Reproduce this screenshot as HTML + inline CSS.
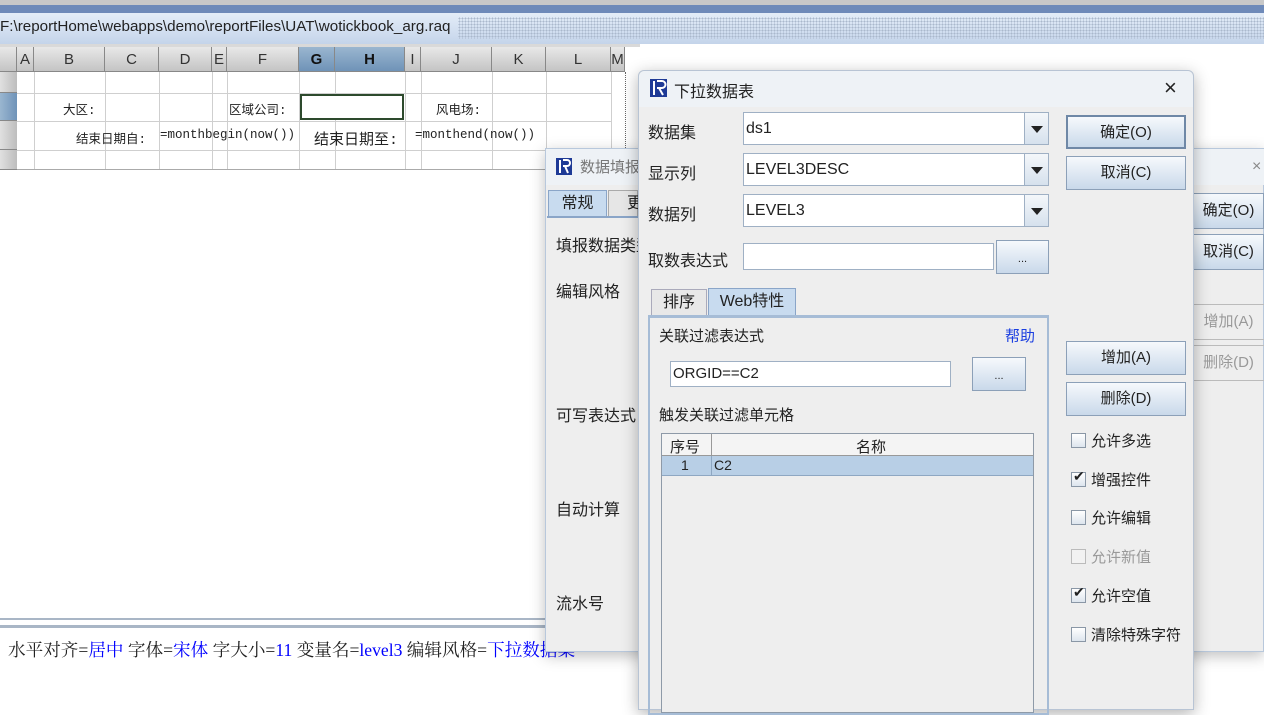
<!DOCTYPE html>
<html><head><meta charset="utf-8"><style>
*{margin:0;padding:0;box-sizing:border-box}
body{width:1264px;height:701px;overflow:hidden;background:#fff;position:relative;font-family:"Liberation Sans","Noto Sans CJK SC",sans-serif;font-size:15px;color:#222}
.a{position:absolute}
.ch{position:absolute;top:47px;height:25px;background:linear-gradient(#e8e8e8,#c4c4c4);border-right:1px solid #888;border-bottom:1px solid #888;text-align:center;font-size:15px;line-height:25px;color:#333}
.sel{background:linear-gradient(#9ab6d0,#6f93b8);font-weight:bold;color:#111}
.vl{position:absolute;top:72px;height:98px;width:1px;background:#cfcfcf}
.hl{position:absolute;left:17px;width:594px;height:1px;background:#cfcfcf}
.rh{position:absolute;left:0;width:17px;background:linear-gradient(90deg,#e0e0e0,#bdbdbd);border-bottom:1px solid #888}
.cell{position:absolute;font-family:"Liberation Mono","Noto Sans CJK SC",monospace;font-size:12.5px}
.btn{position:absolute;border:1px solid #8ca0b8;background:linear-gradient(#f6f9fc,#c9d9ea);text-align:center;font-size:15px;color:#222}
.lbl{position:absolute;font-size:16px;color:#222}
.combo{position:absolute;left:743px;width:306px;height:33px;border:1px solid #9fb0c4;background:#fff;font-size:16px;line-height:31px;padding-left:2px}
.combo i{position:absolute;right:0;top:0;width:24px;height:31px;border-left:1px solid #9fb0c4;background:linear-gradient(#f4f7fa,#d6e1ed)}
.combo i:after{content:"";position:absolute;left:6px;top:13px;border-left:6px solid transparent;border-right:6px solid transparent;border-top:7px solid #222}
.cb{position:absolute;left:1071px;width:15px;height:15px;border:1px solid #8a97a6;background:linear-gradient(#fff,#dde5ee)}
.cbl{position:absolute;left:1091px;font-size:15px}
</style></head><body>
<div class="a" style="left:0;top:0;width:1264px;height:5px;background:#c8c8c8"></div>
<div class="a" style="left:0;top:5px;width:1264px;height:8px;background:#6e8ab9"></div>
<div class="a" style="left:0;top:13px;width:1264px;height:31px;background:linear-gradient(#e4edf8,#c4d4ea)"></div>
<div class="a" style="left:458px;top:17px;width:806px;height:22px;background-image:radial-gradient(#aab8cc 0.8px,transparent 1px);background-size:3px 3px"></div>
<div class="a" style="left:0;top:18px;font-size:15.2px;color:#222">F:\reportHome\webapps\demo\reportFiles\UAT\wotickbook_arg.raq</div>
<div class="a" style="left:0;top:44px;width:640px;height:3px;background:#d9d9d9"></div>
<div class="ch" style="left:0;width:17px"></div>
<div class="ch" style="left:17px;width:17px">A</div>
<div class="ch" style="left:34px;width:71px">B</div>
<div class="ch" style="left:105px;width:54px">C</div>
<div class="ch" style="left:159px;width:53px">D</div>
<div class="ch" style="left:212px;width:15px">E</div>
<div class="ch" style="left:227px;width:72px">F</div>
<div class="ch sel" style="left:299px;width:36px">G</div>
<div class="ch sel" style="left:335px;width:70px">H</div>
<div class="ch" style="left:405px;width:16px">I</div>
<div class="ch" style="left:421px;width:71px">J</div>
<div class="ch" style="left:492px;width:54px">K</div>
<div class="ch" style="left:546px;width:65px">L</div>
<div class="ch" style="left:611px;width:14px">M</div>
<div class="rh" style="top:72px;height:21px"></div>
<div class="rh" style="top:93px;height:28px;background:linear-gradient(90deg,#9ab6d0,#6f93b8)"></div>
<div class="rh" style="top:121px;height:29px"></div>
<div class="rh" style="top:150px;height:20px"></div>
<div class="vl" style="left:34px"></div><div class="vl" style="left:105px"></div><div class="vl" style="left:159px"></div><div class="vl" style="left:212px"></div><div class="vl" style="left:227px"></div><div class="vl" style="left:299px"></div><div class="vl" style="left:335px"></div><div class="vl" style="left:405px"></div><div class="vl" style="left:421px"></div><div class="vl" style="left:492px"></div><div class="vl" style="left:546px"></div><div class="vl" style="left:611px"></div>
<div class="a" style="left:625px;top:72px;height:98px;border-left:1px dotted #666"></div>
<div class="hl" style="top:93px"></div><div class="hl" style="top:121px"></div><div class="hl" style="top:150px"></div><div class="hl" style="top:169px;background:#aaa"></div>
<div class="a" style="left:300px;top:94px;width:104px;height:26px;border:2px solid #2d4a2d;background:#fff"></div>
<div class="cell" style="left:63px;top:99px">大区:</div>
<div class="cell" style="left:229px;top:99px">区域公司:</div>
<div class="cell" style="left:436px;top:99px">风电场:</div>
<div class="cell" style="left:76px;top:128px">结束日期自:</div>
<div class="cell" style="left:160px;top:128px">=monthbegin(now())</div>
<div class="cell" style="left:314px;top:128px;font-size:15px">结束日期至:</div>
<div class="cell" style="left:415px;top:128px">=monthend(now())</div>
<div class="a" style="left:0;top:618px;width:545px;height:2px;background:#a9b6c6"></div>
<div class="a" style="left:0;top:625px;width:545px;height:3px;background:#a9b6c6"></div>
<div class="a" style="left:8px;top:637px;font-size:17.6px;font-family:'Liberation Serif','Noto Serif CJK SC',serif">水平对齐=<span style="color:#00f">居中</span> 字体=<span style="color:#00f">宋体</span> 字大小=<span style="color:#00f">11</span> 变量名=<span style="color:#00f">level3</span> 编辑风格=<span style="color:#00f">下拉数据集</span></div>
<div class="a" style="left:545px;top:148px;width:719px;height:504px;background:#eeeeee;border:1px solid #b8c8dc;box-shadow:0 4px 14px rgba(0,0,0,.25)"></div>
<div class="a" style="left:546px;top:149px;width:718px;height:36px;background:#eef2f6"></div>
<svg class="a" style="left:556px;top:158px" width="16" height="17"><rect width="16" height="17" fill="#1e3a96"/><rect x="3" y="2" width="2" height="13" fill="#fff"/><path d="M7 2h4a3 3 0 0 1 0 6h-4M9 8l3 7" stroke="#fff" stroke-width="2" fill="none"/></svg>
<div class="a" style="left:580px;top:156px;font-size:15px;color:#777">数据填报</div>
<div class="a" style="left:1252px;top:158px;font-size:16px;color:#888">×</div>
<div class="a" style="left:548px;top:190px;width:59px;height:27px;background:#c8dbef;border:1px solid #8aa5c8;border-bottom:none;text-align:center;line-height:25px;font-size:16px">常规</div>
<div class="a" style="left:608px;top:190px;width:30px;height:27px;background:#e6e6e6;border:1px solid #aaa;padding-left:18px;line-height:25px;font-size:16px">更</div>
<div class="a" style="left:547px;top:216px;width:91px;height:2px;background:#8aa5c8"></div>
<div class="lbl" style="left:556px;top:232px">填报数据类型</div>
<div class="lbl" style="left:556px;top:278px">编辑风格</div>
<div class="lbl" style="left:556px;top:402px">可写表达式</div>
<div class="lbl" style="left:556px;top:496px">自动计算</div>
<div class="lbl" style="left:556px;top:590px">流水号</div>
<div class="btn" style="left:1193px;top:193px;width:71px;height:36px;line-height:34px">确定(O)</div>
<div class="btn" style="left:1193px;top:234px;width:71px;height:36px;line-height:34px">取消(C)</div>
<div class="a" style="left:1193px;top:304px;width:71px;height:36px;border-top:1px solid #bbb;border-bottom:1px solid #bbb;line-height:34px;text-align:center;color:#999;font-size:15px">增加(A)</div>
<div class="a" style="left:1193px;top:345px;width:71px;height:36px;border-top:1px solid #bbb;border-bottom:1px solid #bbb;line-height:34px;text-align:center;color:#999;font-size:15px">删除(D)</div>
<div class="a" style="left:638px;top:70px;width:556px;height:640px;background:#eeeeee;border:1px solid #b8c4d4;border-radius:6px 6px 0 0;box-shadow:0 4px 16px rgba(0,0,0,.3)"></div>
<div class="a" style="left:639px;top:71px;width:554px;height:36px;background:#eef2f6;border-radius:6px 6px 0 0"></div>
<svg class="a" style="left:650px;top:79px" width="17" height="18"><rect width="17" height="18" fill="#1e3a96"/><rect x="3" y="2" width="2" height="14" fill="#fff"/><path d="M7 2h5a3 3 0 0 1 0 7h-5M9 9l4 7" stroke="#fff" stroke-width="2" fill="none"/></svg>
<div class="a" style="left:674px;top:78px;font-size:16px">下拉数据表</div>
<div class="a" style="left:1164px;top:75px;font-size:22px;font-weight:300">×</div>
<div class="lbl" style="left:648px;top:119px">数据集</div>
<div class="lbl" style="left:648px;top:160px">显示列</div>
<div class="lbl" style="left:648px;top:201px">数据列</div>
<div class="lbl" style="left:648px;top:247px">取数表达式</div>
<div class="combo" style="top:112px">ds1<i></i></div>
<div class="combo" style="top:153px">LEVEL3DESC<i></i></div>
<div class="combo" style="top:194px">LEVEL3<i></i></div>
<div class="a" style="left:743px;top:243px;width:251px;height:27px;border:1px solid #9fb0c4;background:#fff"></div>
<div class="btn" style="left:996px;top:240px;width:53px;height:34px;line-height:36px;font-size:11px">...</div>
<div class="btn" style="left:1066px;top:115px;width:120px;height:34px;line-height:32px;border:2px solid #6f88a6">确定(O)</div>
<div class="btn" style="left:1066px;top:156px;width:120px;height:34px;line-height:32px">取消(C)</div>
<div class="btn" style="left:1066px;top:341px;width:120px;height:34px;line-height:32px">增加(A)</div>
<div class="btn" style="left:1066px;top:382px;width:120px;height:34px;line-height:32px">删除(D)</div>
<div class="a" style="left:651px;top:289px;width:56px;height:27px;background:#e8e8e8;border:1px solid #aab;border-bottom:none;text-align:center;line-height:25px;font-size:16px">排序</div>
<div class="a" style="left:708px;top:288px;width:88px;height:28px;background:#c8dbef;border:1px solid #8aa5c8;border-bottom:none;text-align:center;line-height:26px;font-size:16px">Web特性</div>
<div class="a" style="left:648px;top:315px;width:401px;height:400px;border:2px solid #a6bcd6;border-top:3px solid #a6bcd6"></div>
<div class="a" style="left:659px;top:325px;font-size:15px">关联过滤表达式</div>
<div class="a" style="left:1005px;top:325px;font-size:15px;color:#1a3ee0">帮助</div>
<div class="a" style="left:670px;top:361px;width:281px;height:26px;border:1px solid #9fb0c4;background:#fff;font-size:15px;line-height:24px;padding-left:2px">ORGID==C2</div>
<div class="btn" style="left:972px;top:357px;width:54px;height:34px;line-height:36px;font-size:11px">...</div>
<div class="a" style="left:659px;top:404px;font-size:15px">触发关联过滤单元格</div>
<div class="a" style="left:661px;top:433px;width:373px;height:280px;border:1px solid #8e9aa8;background:#eeeeee"></div>
<div class="a" style="left:662px;top:434px;width:371px;height:22px;background:#f4f4f4;border-bottom:1px solid #999"></div>
<div class="a" style="left:711px;top:434px;width:1px;height:42px;background:#999"></div>
<div class="a" style="left:670px;top:436px;font-size:15px">序号</div>
<div class="a" style="left:856px;top:436px;font-size:15px">名称</div>
<div class="a" style="left:662px;top:456px;width:371px;height:20px;background:#b8cfe6;border-bottom:1px solid #8ea7c2"></div>
<div class="a" style="left:711px;top:456px;width:1px;height:20px;background:#8ea7c2"></div>
<div class="a" style="left:681px;top:457px;font-size:14px">1</div>
<div class="a" style="left:714px;top:457px;font-size:14px">C2</div>
<div class="cb" style="top:433px"></div><div class="cbl" style="top:430px">允许多选</div>
<div class="cb" style="top:472px"></div><div class="a" style="left:1073px;top:468px;font-size:14px">✔</div><div class="cbl" style="top:469px">增强控件</div>
<div class="cb" style="top:510px"></div><div class="cbl" style="top:507px">允许编辑</div>
<div class="cb" style="top:549px;border-color:#bbb;background:#f2f2f2"></div><div class="cbl" style="top:546px;color:#999">允许新值</div>
<div class="cb" style="top:588px"></div><div class="a" style="left:1073px;top:584px;font-size:14px">✔</div><div class="cbl" style="top:585px">允许空值</div>
<div class="cb" style="top:627px"></div><div class="cbl" style="top:624px">清除特殊字符</div>
</body></html>
